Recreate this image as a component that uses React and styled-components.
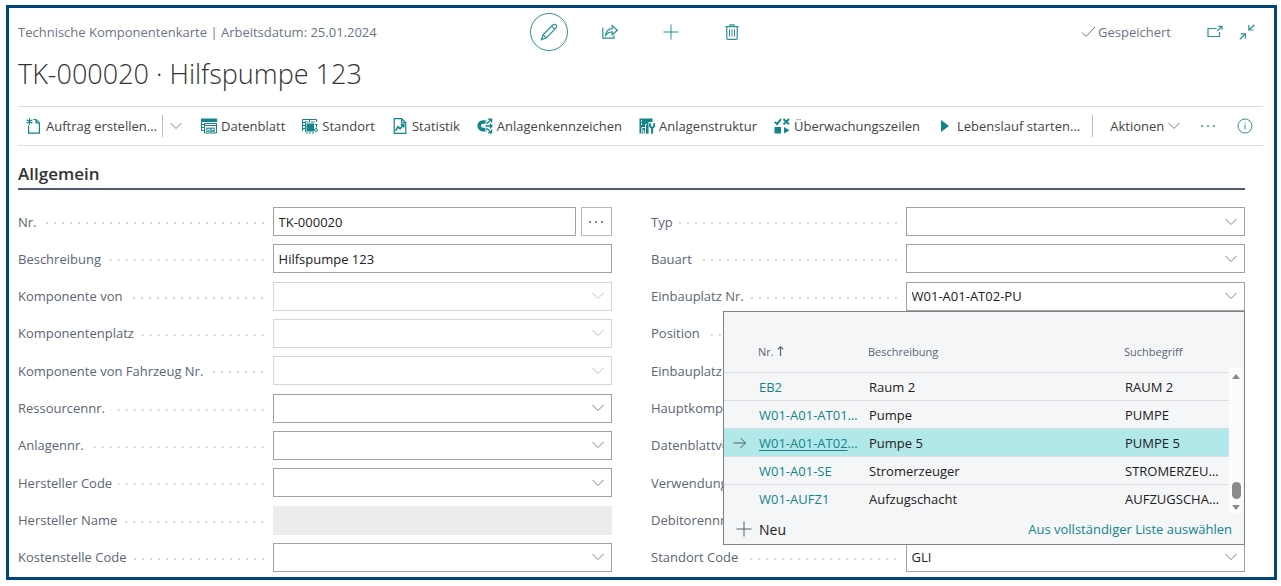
import React, { useState } from 'react'
import styled, { createGlobalStyle } from 'styled-components';

const GlobalStyle = createGlobalStyle`
  * {
    box-sizing: border-box;
  }
  body {
    margin: 0;
    background-color: #fff;
    color: #212121;
    font-family: "Open Sans", "Noto Sans", sans-serif;
    font-size: 13px;
  }
  button, input {
    font: inherit;
    color: inherit;
  }
`;

const Page = styled.div`
  min-height: 100vh;
  padding: 5px 4px 6px 6px;
  display: flex;
`;

const Frame = styled.main`
  flex: 1;
  min-width: 0;
  border: 3px solid #00457c;
  padding: 0 11px 5px 9px;
  display: flex;
  flex-direction: column;
`;

const Header = styled.header`
  display: grid;
  grid-template-columns: 1fr auto 1fr;
  align-items: center;
  padding-top: 5px;
`;

const Caption = styled.div`
  color: #6b7686;
  white-space: nowrap;
`;

const HeaderActions = styled.div`
  display: flex;
  gap: 23px;
`;

const IconButton = styled.button`
  width: ${(props) => props.$size || 38}px;
  height: ${(props) => props.$size || 38}px;
  display: flex;
  align-items: center;
  justify-content: center;
  padding: 0;
  border: ${(props) => (props.$round ? "1px solid #2b9197" : "none")};
  border-radius: 50%;
  background: none;
  color: ${(props) => (props.$muted ? "#7d8087" : "#2b9197")};
  cursor: pointer;
`;

const HeaderStatus = styled.div`
  display: flex;
  align-items: center;
  justify-content: flex-end;
  padding-right: 7px;
  color: #6b7686;
`;

const Saved = styled.span`
  display: flex;
  align-items: center;
  gap: 2px;
  margin-right: 35px;
`;

const WindowButtons = styled.div`
  display: flex;
  gap: 14px;
`;

const Title = styled.h1`
  margin: 3px 0 12px;
  font-size: 27px;
  line-height: 40px;
  font-weight: 300;
  color: #333;
`;

const Toolbar = styled.nav`
  display: flex;
  align-items: center;
  height: 40px;
  padding: 0 8px;
  border-top: 1px solid #dddee2;
  border-bottom: 1px solid #dddee2;
`;

const ToolbarItems = styled.div`
  flex: 1;
  display: flex;
  align-items: center;
  gap: 17px;
`;

const ToolbarButton = styled.button`
  display: flex;
  align-items: center;
  gap: 4px;
  height: 28px;
  padding: 0;
  border: none;
  background: none;
  color: #444;
  white-space: nowrap;
  cursor: pointer;

  svg {
    color: ${(props) => (props.$menu ? "#7d8087" : "#12848a")};
    flex: none;
  }
`;

const SplitButton = styled.div`
  display: flex;
  align-items: center;
`;

const Separator = styled.span`
  width: 1px;
  height: 22px;
  margin: 0 5px;
  background-color: #b8bec8;
`;

const ToolbarEnd = styled.div`
  display: flex;
  align-items: center;
  padding: 0 6px 0 17px;
  margin-left: 12px;
  border-left: 1px solid #b8bec8;
  height: 22px;
`;

const SectionTitle = styled.h2`
  margin: 16px 18px 0 0;
  padding-bottom: 2px;
  border-bottom: 2px solid #505c6d;
  font-size: 17px;
  line-height: 24px;
  font-weight: 600;
  color: #333;
`;

const Form = styled.form`
  flex: 1;
  display: grid;
  grid-template-columns: 1fr 1fr;
  column-gap: 39px;
  padding: 17px 18px 0 0;
`;

const Column = styled.div`
  display: flex;
  flex-direction: column;
  justify-content: space-between;
  gap: 8px;
  min-width: 0;
`;

const Row = styled.div`
  position: relative;
  display: grid;
  grid-template-columns: 3fr 4fr;
  align-items: center;
  height: 29px;
`;

const LabelCell = styled.div`
  display: flex;
  align-items: center;
  gap: 6px;
  min-width: 0;
  padding-right: 9px;
`;

const Label = styled.label`
  white-space: nowrap;
  color: #5b6675;
`;

const Leader = styled.span`
  flex: 1;
  height: 2px;
  margin-top: 3px;
  background: linear-gradient(90deg, transparent 6px, #d3d6db 6px) right top / 8px 2px repeat-x;
`;

const Control = styled.div`
  display: flex;
  gap: 5px;
  min-width: 0;
  height: 29px;
`;

const InputBox = styled.div`
  flex: 1;
  display: flex;
  min-width: 0;
  border: 1px solid ${(props) => (props.$disabled ? "#d3d6dc" : "#9ba2ae")};
  background-color: #fff;
  ${(props) => props.$readOnly && `
    border-color: #ebecee;
    background-color: #ebecee;
  `}
`;

const Input = styled.input`
  flex: 1;
  min-width: 0;
  padding: 0 0 0 5px;
  border: none;
  outline: none;
  background: none;
`;

const DropButton = styled.button`
  width: 26px;
  padding: 0;
  border: none;
  background: none;
  display: flex;
  align-items: center;
  justify-content: center;
  color: ${(props) => (props.disabled ? "#b9bcc1" : "#7d8087")};
`;

const AssistButton = styled.button`
  width: 31px;
  padding: 0;
  border: 1px solid #b4b7bc;
  background-color: #fff;
  display: flex;
  align-items: center;
  justify-content: center;
  color: #505c6d;
`;

const Popup = styled.div`
  position: absolute;
  top: 100%;
  right: 0;
  z-index: 10;
  width: 522px;
  border: 1px solid #808285;
  background-color: #f5f6f8;
`;

const PopupBody = styled.div`
  display: flex;
`;

const LookupTable = styled.table`
  flex: 1;
  table-layout: fixed;
  border-collapse: collapse;
  width: 100%;
`;

const HeadCell = styled.th`
  width: ${(props) => props.$width};
  height: 61px;
  padding: 20px 0 0;
  text-align: left;
  font-size: 11px;
  font-weight: 400;
  color: #5b6675;
`;

const BodyRow = styled.tr`
  height: 28px;
  border-top: 1px solid #d9dbdf;
  background-color: ${(props) => (props.$active ? "#b2e8ea" : "transparent")};
`;

const Cell = styled.td`
  padding: 0 8px 0 1px;
  overflow: hidden;
  white-space: nowrap;
  text-overflow: ellipsis;
`;

const MarkCell = styled.td`
  padding: 0 0 0 9px;
  color: #505c6d;

  svg {
    display: block;
  }
`;

const CodeCell = styled(Cell)`
  color: #12848a;
`;

const CodeLink = styled.a`
  color: #12848a;
  text-decoration: ${(props) => (props.$active ? "underline" : "none")};
  text-underline-offset: 2px;
`;

const Scrollbar = styled.div`
  width: 14px;
  margin: 56px 1px 0 0;
  padding: 6px 0 3px;
  display: flex;
  flex-direction: column;
  align-items: center;
  background-color: #fcfcfc;
  color: #8a8a8a;
`;

const Thumb = styled.div`
  width: 9px;
  height: 17px;
  margin: auto 0 6px;
  border-radius: 5px;
  background-color: #8a8a8a;
`;

const PopupFooter = styled.div`
  display: flex;
  align-items: center;
  justify-content: space-between;
  height: 31px;
  padding: 2px 12px 0;
`;

const NewButton = styled.button`
  display: flex;
  align-items: center;
  gap: 7px;
  padding: 0;
  border: none;
  background: none;
  font-size: 14px;

  svg {
    color: #505c6d;
  }
`;

const FullListLink = styled.a`
  color: #12848a;
  text-decoration: none;
`;

const Svg = ({ size = 16, width, height, box, children, ...rest }) => (
  <svg
    width={width || size}
    height={height || size}
    viewBox={box || `0 0 ${width || size} ${height || size}`}
    fill="none"
    stroke="currentColor"
    aria-hidden="true"
    {...rest}
  >
    {children}
  </svg>
);

const Chevron = () => (
  <Svg width={12} height={8}>
    <path d="M0.5 1 L6 6.5 L11.5 1" />
  </Svg>
);

const Dots = () => (
  <Svg width={16} height={4} fill="currentColor" stroke="none">
    <circle cx="2" cy="2" r="1" />
    <circle cx="8" cy="2" r="1" />
    <circle cx="14" cy="2" r="1" />
  </Svg>
);

const Plus = () => (
  <Svg size={16}>
    <path d="M8 0.5 V15.5 M0.5 8 H15.5" />
  </Svg>
);

const Pencil = () => (
  <Svg size={18}>
    <path d="M1.5 16.5 L3 11.8 L12.8 2 A2.1 2.1 0 0 1 16 5.2 L6.2 15 Z M11.6 3.2 L14.8 6.4 M3 11.8 L6.2 15" strokeWidth="1.2" />
  </Svg>
);

const Share = () => (
  <Svg size={16}>
    <path d="M0.8 3.8 V14.2 H12 V11.5" strokeWidth="1.2" />
    <path d="M3.6 11.4 C4 7 6.5 4.8 10.2 4.6 V1.6 L15.3 6.2 L10.2 10.8 V7.8 C7.4 7.8 5.4 8.8 3.6 11.4 Z" strokeWidth="1.2" />
  </Svg>
);

const Trash = () => (
  <Svg size={16}>
    <path d="M1.5 2.7 H14.5 M6 2.5 V0.8 H10 V2.5" strokeWidth="1.2" />
    <path d="M2.8 3 V14 Q2.8 15.3 4 15.3 H12 Q13.2 15.3 13.2 14 V3" strokeWidth="1.2" />
    <path d="M5.5 5.2 V12.5 M8 5.2 V12.5 M10.5 5.2 V12.5" />
  </Svg>
);

const Check = () => (
  <Svg width={15} height={12}>
    <path d="M1 6.5 L5 10.5 L14 1" />
  </Svg>
);

const PopOut = () => (
  <Svg size={16}>
    <path d="M9.5 4.5 H1 V12.5 H12.5 V8" strokeWidth="1.2" />
    <path d="M10 7 L15 2.4 M11.4 2.4 H15 V5.8" strokeWidth="1.2" />
  </Svg>
);

const Collapse = () => (
  <Svg size={16}>
    <path d="M15.5 0.8 L10 5.8 M9.8 1 V6 H14.5" strokeWidth="1.2" />
    <path d="M0.8 15.2 L6.4 10 M1.7 9.8 H6.5 V14.4" strokeWidth="1.2" />
  </Svg>
);

const Info = () => (
  <Svg size={16}>
    <circle cx="8" cy="8" r="7" />
    <path d="M8 6.6 V11.6 M8 4.2 V5.4" />
  </Svg>
);

const ArrowRight = () => (
  <Svg width={14} height={12}>
    <path d="M0.5 6 H12.5 M7.5 1 L12.5 6 L7.5 11" />
  </Svg>
);

const ArrowUp = () => (
  <Svg width={7} height={10}>
    <path d="M3.5 0.8 V10 M0.8 3.4 L3.5 0.8 L6.2 3.4" strokeWidth="1.2" />
  </Svg>
);

const NewDoc = () => (
  <Svg size={16}>
    <path d="M2.6 7.5 V15.2 H13.4 V5 L10 1.5 H7.5 M10 1.5 V5 H13.4" strokeWidth="1.2" />
    <path d="M3.5 0.3 V6.7 M0.5 1.8 L6.5 5.2 M6.5 1.8 L0.5 5.2" strokeWidth="1.2" />
  </Svg>
);

const DataSheet = () => (
  <Svg size={16}>
    <path d="M0 0.5 H16 V4 H0 Z" fill="currentColor" stroke="none" />
    <path d="M0.5 4 V12.5 H3 M1 6.5 H4 M1 9.5 H3" />
    <path d="M3.5 5.5 H15.5 V15 H3.5 Z M3.5 7.5 H15.5" />
    <path d="M5 9.5 H14 V14 H5 Z" fill="currentColor" stroke="none" opacity="0.75" />
    <path d="M6 13 L7.5 11 L9 13 M10.5 11.5 H13" stroke="#fff" strokeWidth="0.8" />
  </Svg>
);

const Location = () => (
  <Svg size={16}>
    <path d="M0.5 13 V1.5 H14.5 V4 M3.5 3 V14 M7.5 1.5 V4.5 M4.5 4 H6.5 M9 4 H12.5" />
    <path d="M1 4.5 H3 M1 7.5 H3 M1 10.5 H3" />
    <path d="M4.5 5.5 H12 V13.5 H4.5 Z" fill="currentColor" stroke="none" />
    <path d="M4 15 H13" strokeDasharray="2 1" />
    <circle cx="14" cy="12" r="1.4" />
    <path d="M12.8 6.5 H15.5 M14.5 7 V9.5" />
  </Svg>
);

const Statistics = () => (
  <Svg size={16}>
    <path d="M2.2 0.7 H9.6 L13.8 4.8 V15.3 H2.2 Z M9.6 0.7 V4.8 H13.8" strokeWidth="1.2" />
    <path d="M3.4 12.8 L6 8.8 L8 10.8 L11.6 6.6 M8.8 6.8 H11.8 V9.4" strokeWidth="1.5" />
  </Svg>
);

const Marker = () => (
  <Svg size={16}>
    <path d="M9.5 4 H6 A3.8 3.8 0 0 0 6 11.6 H9.5" strokeWidth="3.6" />
    <path d="M8.5 2.5 V13.5" stroke="#fff" strokeWidth="0.6" />
    <path d="M10 5.4 L14.2 1.6 M11 1.2 H14.6 V4.6 M8.5 8 H15 M12.8 5.8 L15 8 L12.8 10.2 M10 10.6 L14.2 14.4 M14.6 11.4 V14.8 H11" strokeWidth="1.3" />
  </Svg>
);

const Structure = () => (
  <Svg size={16}>
    <path d="M0.5 0.5 H13.5 V4 H9.5 V15.5 H0.5 Z" fill="currentColor" stroke="none" />
    <path d="M2.8 15.5 V9.5 H6.5 V15.5 M6.5 9.5 V6.5 H9.5" stroke="#fff" />
    <path d="M2.5 2.2 V3.8 M2.5 5.2 V7 M4.7 12 V15.5" stroke="#fff" />
    <path d="M8.5 6 V15.5" strokeWidth="1.2" />
    <path d="M11 5.2 V8.2 L13 10.4 L15.2 8.2 V5.2 M13.1 10 V15.8" strokeWidth="1.9" />
  </Svg>
);

const Monitoring = () => (
  <Svg size={16}>
    <path d="M0.8 3.8 L3 6 L7 1.2 M9.5 1 L15 6.4 M15 1 L9.5 6.4" strokeWidth="1.9" />
    <path d="M0.5 9 H7 V15.5 H0.5 Z M10 9 L15.5 12.2 L10 15.5 Z" fill="currentColor" stroke="none" />
  </Svg>
);

const Play = () => (
  <Svg size={16}>
    <path d="M4 2 L12 8 L4 14 Z" fill="currentColor" stroke="none" />
  </Svg>
);

const actions = [
  { text: "Datenblatt", icon: <DataSheet /> },
  { text: "Standort", icon: <Location /> },
  { text: "Statistik", icon: <Statistics /> },
  { text: "Anlagenkennzeichen", icon: <Marker /> },
  { text: "Anlagenstruktur", icon: <Structure /> },
  { text: "Überwachungszeilen", icon: <Monitoring /> },
  { text: "Lebenslauf starten...", icon: <Play /> },
];

const leftFields = [
  { id: "nr", label: "Nr.", value: "TK-000020", type: "assist" },
  { id: "beschreibung", label: "Beschreibung", value: "Hilfspumpe 123", type: "text" },
  { id: "komponenteVon", label: "Komponente von", type: "lookup", disabled: true },
  { id: "komponentenplatz", label: "Komponentenplatz", type: "lookup", disabled: true },
  { id: "fahrzeug", label: "Komponente von Fahrzeug Nr.", type: "lookup", disabled: true },
  { id: "ressource", label: "Ressourcennr.", type: "lookup" },
  { id: "anlage", label: "Anlagennr.", type: "lookup" },
  { id: "herstellerCode", label: "Hersteller Code", type: "lookup" },
  { id: "herstellerName", label: "Hersteller Name", type: "text", readOnly: true },
  { id: "kostenstelle", label: "Kostenstelle Code", type: "lookup" },
];

const rightFields = [
  { id: "typ", label: "Typ", type: "lookup" },
  { id: "bauart", label: "Bauart", type: "lookup" },
  { id: "einbauplatzNr", label: "Einbauplatz Nr.", value: "W01-A01-AT02-PU", type: "lookup", open: true },
  { id: "position", label: "Position", type: "text" },
  { id: "einbauplatz", label: "Einbauplatz", type: "text" },
  { id: "hauptkomponente", label: "Hauptkomponente", type: "lookup" },
  { id: "datenblatt", label: "Datenblattvorlage", type: "lookup" },
  { id: "verwendung", label: "Verwendungszweck", type: "text" },
  { id: "debitor", label: "Debitorennr.", type: "lookup" },
  { id: "standort", label: "Standort Code", value: "GLI", type: "lookup" },
];

const places = [
  { code: "EB2", name: "Raum 2", search: "RAUM 2" },
  { code: "W01-A01-AT01-PU", name: "Pumpe", search: "PUMPE" },
  { code: "W01-A01-AT02-PU", name: "Pumpe 5", search: "PUMPE 5" },
  { code: "W01-A01-SE", name: "Stromerzeuger", search: "STROMERZEUGER" },
  { code: "W01-AUFZ1", name: "Aufzugschacht", search: "AUFZUGSCHACHT" },
];

const Lookup = ({ selected, onSelect }) => {
  const handleClick = (e, code) => {
    e.preventDefault();
    onSelect(code);
  };

  return (
    <Popup>
      <PopupBody>
        <LookupTable>
          <thead>
            <tr>
              <HeadCell $width="34px" />
              <HeadCell $width="110px">Nr. <ArrowUp /></HeadCell>
              <HeadCell>Beschreibung</HeadCell>
              <HeadCell $width="105px">Suchbegriff</HeadCell>
            </tr>
          </thead>
          <tbody>
            {places.map((place) => {
              const active = place.code === selected;
              return (
                <BodyRow key={place.code} $active={active}>
                  <MarkCell>{active && <ArrowRight />}</MarkCell>
                  <CodeCell>
                    <CodeLink href="#" $active={active} onClick={(e) => handleClick(e, place.code)}>
                      {place.code}
                    </CodeLink>
                  </CodeCell>
                  <Cell>{place.name}</Cell>
                  <Cell>{place.search}</Cell>
                </BodyRow>
              );
            })}
          </tbody>
        </LookupTable>
        <Scrollbar>
          <Svg width={8} height={5} fill="currentColor" stroke="none">
            <path d="M0 5 L4 0 L8 5 Z" />
          </Svg>
          <Thumb />
          <Svg width={8} height={5} fill="currentColor" stroke="none">
            <path d="M0 0 L4 5 L8 0 Z" />
          </Svg>
        </Scrollbar>
      </PopupBody>
      <PopupFooter>
        <NewButton type="button"><Plus />Neu</NewButton>
        <FullListLink href="#">Aus vollständiger Liste auswählen</FullListLink>
      </PopupFooter>
    </Popup>
  );
};

const Field = ({ field, value, onChange }) => (
  <Row>
    <LabelCell>
      <Label htmlFor={field.id}>{field.label}</Label>
      <Leader />
    </LabelCell>
    <Control>
      <InputBox $disabled={field.disabled} $readOnly={field.readOnly}>
        <Input
          id={field.id}
          type="text"
          value={value}
          disabled={field.disabled}
          readOnly={field.readOnly}
          onChange={(e) => onChange(field.id, e.target.value)}
        />
        {field.type === "lookup" && (
          <DropButton type="button" disabled={field.disabled} aria-label={field.label}>
            <Chevron />
          </DropButton>
        )}
      </InputBox>
      {field.type === "assist" && (
        <AssistButton type="button" aria-label={field.label}><Dots /></AssistButton>
      )}
    </Control>
    {field.open && (
      <Lookup selected={value} onSelect={(code) => onChange(field.id, code)} />
    )}
  </Row>
);

const App = () => {
  const [inputs, setInputs] = useState(() =>
    Object.fromEntries([...leftFields, ...rightFields].map((f) => [f.id, f.value || ""]))
  );

  const handleChange = (id, value) => {
    setInputs((prev) => {
      return { ...prev, [id]: value };
    });
  };

  return (
    <Page>
      <GlobalStyle />
      <Frame>
        <Header>
          <Caption>Technische Komponentenkarte | Arbeitsdatum: 25.01.2024</Caption>
          <HeaderActions>
            <IconButton $round aria-label="Bearbeiten"><Pencil /></IconButton>
            <IconButton aria-label="Teilen"><Share /></IconButton>
            <IconButton aria-label="Neu"><Plus /></IconButton>
            <IconButton aria-label="Löschen"><Trash /></IconButton>
          </HeaderActions>
          <HeaderStatus>
            <Saved><Check />Gespeichert</Saved>
            <WindowButtons>
              <IconButton $size={18} aria-label="Neues Fenster"><PopOut /></IconButton>
              <IconButton $size={18} aria-label="Verkleinern"><Collapse /></IconButton>
            </WindowButtons>
          </HeaderStatus>
        </Header>
        <Title>TK-000020 · Hilfspumpe 123</Title>

        <Toolbar>
          <ToolbarItems>
            <SplitButton>
              <ToolbarButton><NewDoc />Auftrag erstellen...</ToolbarButton>
              <Separator />
              <IconButton $size={16} $muted aria-label="Weitere Optionen"><Chevron /></IconButton>
            </SplitButton>
            {actions.map((action) => (
              <ToolbarButton key={action.text}>{action.icon}{action.text}</ToolbarButton>
            ))}
          </ToolbarItems>
          <ToolbarEnd>
            <ToolbarButton $menu>Aktionen<Chevron /></ToolbarButton>
            <IconButton $size={56} aria-label="Mehr"><Dots /></IconButton>
            <IconButton $size={18} aria-label="Info"><Info /></IconButton>
          </ToolbarEnd>
        </Toolbar>

        <SectionTitle>Allgemein</SectionTitle>
        <Form onSubmit={(e) => e.preventDefault()}>
          <Column>
            {leftFields.map((field) => (
              <Field key={field.id} field={field} value={inputs[field.id]} onChange={handleChange} />
            ))}
          </Column>
          <Column>
            {rightFields.map((field) => (
              <Field key={field.id} field={field} value={inputs[field.id]} onChange={handleChange} />
            ))}
          </Column>
        </Form>
      </Frame>
    </Page>
  )
}

export default App
